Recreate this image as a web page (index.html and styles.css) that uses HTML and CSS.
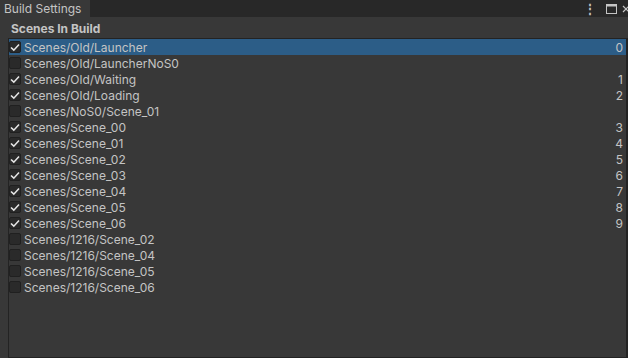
FILE: index.html
```html
<!DOCTYPE html>
<html lang="en">
<head>
    <meta charset="UTF-8">
    <title>Build Settings</title>
    <link rel="stylesheet" href="styles.css">
</head>
<body>

<div class="window">
    <div class="tab-bar">
        <div class="tab">Build Settings</div>
        <div class="tab-tools">
            <span class="kebab">&#8942;</span>
            <svg class="max-icon" width="11" height="10" viewBox="0 0 11 10">
                <rect x="0.5" y="0.5" width="10" height="9" fill="none" stroke="#c4c4c4"/>
                <rect x="0.5" y="0.5" width="10" height="2" fill="#c4c4c4"/>
            </svg>
            <svg class="close-icon" width="8" height="8" viewBox="0 0 8 8">
                <path d="M1 1 L7 7 M7 1 L1 7" stroke="#c4c4c4" stroke-width="1.2"/>
            </svg>
        </div>
    </div>

    <div class="content">
        <div class="section-title">Scenes In Build</div>
        <div class="scene-list" id="sceneList"></div>
    </div>
</div>

<script>
    const scenes = [
        { path: 'Scenes/Old/Launcher', on: true },
        { path: 'Scenes/Old/LauncherNoS0', on: false },
        { path: 'Scenes/Old/Waiting', on: true },
        { path: 'Scenes/Old/Loading', on: true },
        { path: 'Scenes/NoS0/Scene_01', on: false },
        { path: 'Scenes/Scene_00', on: true },
        { path: 'Scenes/Scene_01', on: true },
        { path: 'Scenes/Scene_02', on: true },
        { path: 'Scenes/Scene_03', on: true },
        { path: 'Scenes/Scene_04', on: true },
        { path: 'Scenes/Scene_05', on: true },
        { path: 'Scenes/Scene_06', on: true },
        { path: 'Scenes/1216/Scene_02', on: false },
        { path: 'Scenes/1216/Scene_04', on: false },
        { path: 'Scenes/1216/Scene_05', on: false },
        { path: 'Scenes/1216/Scene_06', on: false }
    ];

    const list = document.getElementById('sceneList');
    let index = 0;
    scenes.forEach((scene, i) => {
        const row = document.createElement('div');
        row.className = 'scene-row' + (i === 0 ? ' selected' : '');

        const box = document.createElement('span');
        box.className = 'check';
        if (scene.on) {
            box.innerHTML = '<svg width="10" height="9" viewBox="0 0 10 9"><path d="M1 4.5 L3.8 7.2 L9 1.5" fill="none" stroke="#e6e6e6" stroke-width="1.6"/></svg>';
        }

        const name = document.createElement('span');
        name.className = 'scene-name';
        name.textContent = scene.path;

        const num = document.createElement('span');
        num.className = 'scene-index';
        num.textContent = scene.on ? index++ : '';

        row.append(box, name, num);
        list.appendChild(row);
    });
</script>

</body>
</html>
```

FILE: styles.css
```css
body {
    margin: 0;
    background-color: #383838;
    font-family: Inter, "Noto Sans", sans-serif;
    font-size: 12px;
    color: #c4c4c4;
    overflow: hidden;
}
.window {
    width: 628px;
    height: 358px;
    display: flex;
    flex-direction: column;
}
.tab-bar {
    height: 17px;
    background-color: #282828;
    display: flex;
    justify-content: space-between;
    align-items: stretch;
}
.tab {
    background-color: #383838;
    padding: 0 8px 0 4px;
    width: 78px;
    line-height: 17px;
    font-size: 12px;
    color: #c4c4c4;
}
.tab-tools {
    display: flex;
    align-items: center;
    gap: 5px;
    margin-right: -2px;
}
.kebab {
    font-size: 12px;
    line-height: 12px;
    font-weight: bold;
    margin-right: 5px;
}
.content {
    flex: 1;
    display: flex;
    flex-direction: column;
    padding: 0 0 0 8px;
}
.section-title {
    font-weight: bold;
    padding: 4px 0 0 3px;
    height: 17px;
    line-height: 15px;
}
.scene-list {
    flex: 1;
    border: 1px solid #232323;
    border-right-width: 2px;
    background-color: #383838;
}
.scene-row {
    height: 16px;
    display: flex;
    align-items: center;
    padding-right: 3px;
}
.scene-row.selected {
    background-color: #2c5d87;
}
.check {
    width: 12px;
    height: 12px;
    box-sizing: border-box;
    margin-right: 3px;
    background-color: #2a2a2a;
    border: 1px solid #202020;
    border-radius: 2px;
    display: flex;
    align-items: center;
    justify-content: center;
}
.scene-name {
    flex: 1;
    white-space: nowrap;
}
.scene-index {
    text-align: right;
}
```
